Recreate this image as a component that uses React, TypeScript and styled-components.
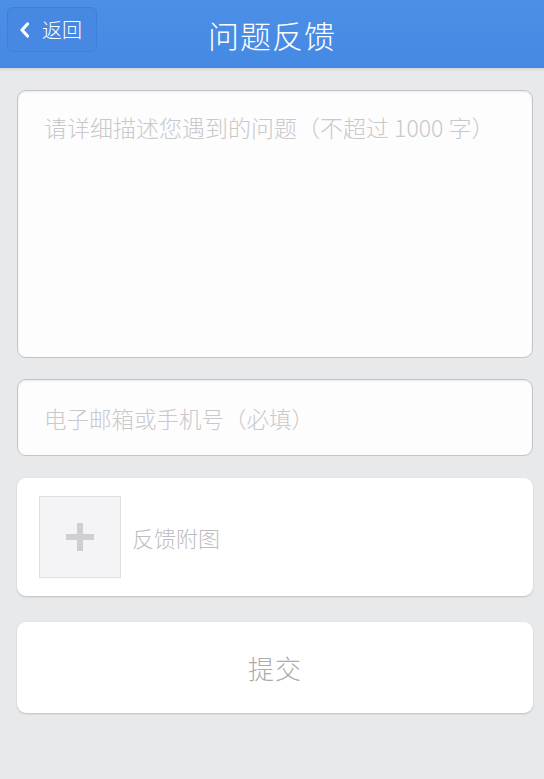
import React from "react";
import styled, { createGlobalStyle } from "styled-components";

const Global = createGlobalStyle`
  html, body { margin: 0; padding: 0; background: #e8e9ea; }
  body { font-family: "Noto Sans CJK SC", "Noto Sans", sans-serif; font-weight: 300; }
  * { box-sizing: border-box; }
`;

const Page = styled.div`
  width: 544px;
  min-height: 779px;
  background: #e8e9ea;
`;

const Header = styled.header`
  height: 68px;
  background: linear-gradient(#4b8fe7, #4689e3);
  display: flex;
  align-items: center;
  position: relative;
  box-shadow: 0 1px 3px rgba(0, 0, 0, 0.12);
`;

const BackButton = styled.button`
  position: absolute;
  left: 7px;
  top: 7px;
  width: 90px;
  height: 45px;
  border: 1px solid #3f7fd6;
  border-radius: 6px;
  background: #4788e2;
  color: #fff;
  font-family: inherit;
  font-weight: 300;
  font-size: 20px;
  display: flex;
  align-items: center;
  padding: 0 0 0 11px;
  gap: 12px;
`;

const Title = styled.h1`
  flex: 1;
  margin: 0;
  text-align: center;
  color: #fff;
  font-size: 31px;
  font-weight: 300;
  letter-spacing: 1px;
`;

const Form = styled.div`
  display: flex;
  flex-direction: column;
  padding: 22px 11px 0 17px;
`;

const FieldBase = styled.div`
  width: 516px;
  background: #fdfdfe;
  border: 1px solid #c4c4c6;
  border-radius: 9px;
  box-shadow: inset 0 1px 2px rgba(0, 0, 0, 0.08);
  color: #c9c9cb;
  padding-left: 26px;
`;

const TextArea = styled(FieldBase)`
  height: 268px;
  padding-top: 20px;
  font-size: 23px;
  line-height: 32px;
`;

const Input = styled(FieldBase)`
  margin-top: 21px;
  height: 77px;
  font-size: 22.5px;
  display: flex;
  align-items: center;
`;

const Card = styled.div<{ $gap: number; $h: number }>`
  width: 516px;
  height: ${(p) => p.$h}px;
  margin-top: ${(p) => p.$gap}px;
  background: #ffffff;
  border-radius: 9px;
  box-shadow: 0 1px 2px rgba(0, 0, 0, 0.18);
`;

const AttachRow = styled(Card)`
  display: flex;
  align-items: center;
  padding-left: 22px;
  gap: 11px;
`;

const AddBox = styled.div`
  width: 82px;
  height: 82px;
  background: #f4f4f6;
  border: 1px solid #e0e0e2;
  display: flex;
  align-items: center;
  justify-content: center;
`;

const AttachLabel = styled.span`
  color: #bdbdbf;
  font-size: 22px;
`;

const Submit = styled(Card)`
  display: flex;
  align-items: center;
  justify-content: center;
  color: #ababad;
  font-size: 26px;
  letter-spacing: 1px;
`;

export default function App() {
  return (
    <Page>
      <Global />
      <Header>
        <BackButton>
          <svg width="11" height="16" viewBox="0 0 11 16">
            <path d="M8.5 2 L3 8 L8.5 14" fill="none" stroke="#fff" strokeWidth="3.2" strokeLinecap="round" strokeLinejoin="round" />
          </svg>
          返回
        </BackButton>
        <Title>问题反馈</Title>
      </Header>
      <Form>
        <TextArea>请详细描述您遇到的问题（不超过 1000 字）</TextArea>
        <Input>电子邮箱或手机号（必填）</Input>
        <AttachRow $gap={22} $h={118}>
          <AddBox>
            <svg width="30" height="30" viewBox="0 0 30 30">
              <rect x="12" y="1" width="6" height="28" fill="#cfcfd2" />
              <rect x="1" y="12" width="28" height="6" fill="#cfcfd2" />
            </svg>
          </AddBox>
          <AttachLabel>反馈附图</AttachLabel>
        </AttachRow>
        <Submit $gap={26} $h={91}>提交</Submit>
      </Form>
    </Page>
  );
}
